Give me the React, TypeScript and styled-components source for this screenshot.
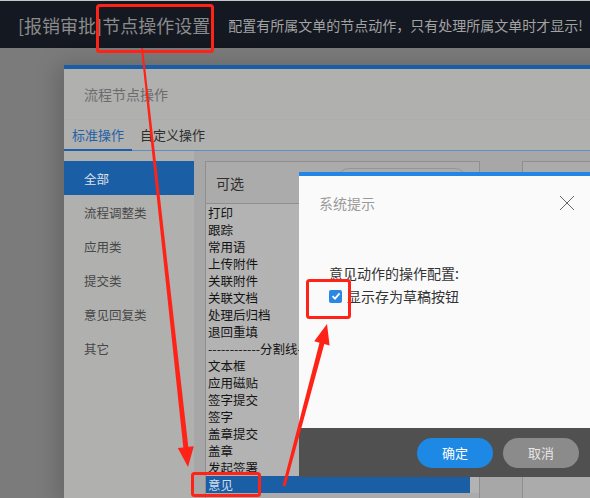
import styled, { createGlobalStyle } from "styled-components";

const GlobalStyle = createGlobalStyle`
  html, body {
    margin: 0;
    padding: 0;
    overflow: hidden;
    background: #7b7b7b;
  }
  * {
    box-sizing: border-box;
  }
  body {
    font-family: "Noto Sans CJK SC", "Noto Sans", sans-serif;
  }
`;

const Page = styled.div`
  position: relative;
  width: 590px;
  height: 498px;
  overflow: hidden;
  background: #7b7b7b;
`;

const Header = styled.div`
  height: 48px;
  background: #141821;
  border-top: 1px solid #c6c6c6;
  display: flex;
  align-items: center;
  padding-left: 18px;
  white-space: nowrap;
`;

const HeadTitle = styled.span`
  font-size: 18px;
  color: #8b8b8b;
`;

const HeadNote = styled.span`
  font-size: 14px;
  color: #a3a3a3;
  margin-left: 18px;
`;

const Stage = styled.div`
  padding: 17px 0 0 64px;
`;

const Modal = styled.div`
  width: 580px;
  height: 440px;
  background: #b0b0af;
  border-top: 4px solid #1a5da6;
  box-shadow: -6px 0 22px rgba(0, 0, 0, 0.18);
`;

const ModalTitle = styled.div`
  height: 51px;
  display: flex;
  align-items: center;
  padding-left: 20px;
  font-size: 14px;
  color: #6c6c6c;
  border-bottom: 1px solid #acacac;
`;

const Tabs = styled.div`
  height: 31px;
  display: flex;
  border-bottom: 1px solid #5d8fc3;
`;

const Tab = styled.div<{ $active?: boolean }>`
  padding: 0 8px;
  display: flex;
  align-items: center;
  font-size: 13px;
  color: ${(p) => (p.$active ? "#2462a6" : "#2e2e2e")};
  border-bottom: 2px solid ${(p) => (p.$active ? "#1d5fa8" : "transparent")};
  margin-bottom: -1px;
`;

const Body = styled.div`
  display: flex;
  height: 100%;
`;

const Sidebar = styled.ul`
  width: 130px;
  flex-shrink: 0;
  list-style: none;
  margin: 0;
  padding: 10px 0 0;
  background: #b0b0af;
`;

const SideItem = styled.li<{ $active?: boolean }>`
  height: 34px;
  display: flex;
  align-items: center;
  padding-left: 20px;
  font-size: 12.5px;
  white-space: nowrap;
  color: ${(p) => (p.$active ? "#dfe3ea" : "#474747")};
  background: ${(p) => (p.$active ? "#1a5ea6" : "transparent")};
`;

const Content = styled.div`
  flex: 1;
  min-width: 0;
  display: flex;
  gap: 42px;
  padding: 10px 0 0 11px;
  background: #a7a7a7;
`;

const Box = styled.div<{ $width: number }>`
  width: ${(p) => p.$width}px;
  flex-shrink: 0;
  border: 1px solid #8f8f8f;
  border-bottom: none;
  background: #ababab;
`;

const BoxHead = styled.div`
  height: 42px;
  display: flex;
  align-items: center;
  justify-content: space-between;
  padding: 0 12px 0 10px;
  font-size: 14px;
  color: #2f2f2f;
  border-bottom: 1px solid #8f8f8f;
`;

const Search = styled.div`
  width: 130px;
  height: 28px;
  border: 1px solid #959595;
  border-radius: 12px;
  align-self: flex-start;
  margin-top: 6px;
`;

const List = styled.ul`
  list-style: none;
  margin: 0;
  padding: 0 9px 0 0;
  background: #b3b3b3;
`;

const ListItem = styled.li<{ $active?: boolean }>`
  height: 17px;
  line-height: 17px;
  padding-left: 2px;
  font-size: 12.5px;
  white-space: nowrap;
  overflow: hidden;
  color: ${(p) => (p.$active ? "#d3dbe8" : "#141414")};
  background: ${(p) => (p.$active ? "#1a5ea6" : "transparent")};
`;

const Dialog = styled.div`
  position: absolute;
  left: 299px;
  top: 172px;
  width: 300px;
  border-top: 4px solid #2186e7;
  background: #fafafa;
`;

const DialogHead = styled.div`
  height: 54px;
  display: flex;
  align-items: center;
  justify-content: space-between;
  padding: 0 24px 0 20px;
  font-size: 14px;
  color: #9a9a9a;
`;

const DialogBody = styled.div`
  height: 198px;
  padding: 33px 0 0 30px;
  font-size: 14px;
  color: #333;
`;

const CheckRow = styled.label`
  display: flex;
  align-items: center;
  gap: 5px;
  margin-top: 3px;
`;

const CheckMark = styled.span`
  width: 13px;
  height: 13px;
  border-radius: 2px;
  background: #2b87e3;
  display: flex;
  align-items: center;
  justify-content: center;
`;

const DialogFoot = styled.div`
  height: 49px;
  background: #505050;
  display: flex;
  justify-content: flex-end;
  align-items: center;
  gap: 10px;
  padding-right: 20px;
`;

const Button = styled.button<{ $primary?: boolean }>`
  width: 76px;
  height: 30px;
  border: none;
  border-radius: 15px;
  font-family: inherit;
  font-size: 13px;
  color: ${(p) => (p.$primary ? "#ffffff" : "#e6e6e6")};
  background: ${(p) => (p.$primary ? "#1e88e5" : "#8b8b8b")};
`;

const Marks = styled.svg`
  position: absolute;
  left: 0;
  top: 0;
  pointer-events: none;
`;

const categories = ["全部", "流程调整类", "应用类", "提交类", "意见回复类", "其它"];

const actions = [
  "打印",
  "跟踪",
  "常用语",
  "上传附件",
  "关联附件",
  "关联文档",
  "处理后归档",
  "退回重填",
  "------------分割线------------",
  "文本框",
  "应用磁贴",
  "签字提交",
  "签字",
  "盖章提交",
  "盖章",
  "发起签署",
  "意见",
];

export default function App() {
  return (
    <Page>
      <GlobalStyle />
      <Header>
        <HeadTitle>[报销审批]节点操作设置</HeadTitle>
        <HeadNote>配置有所属文单的节点动作，只有处理所属文单时才显示!</HeadNote>
      </Header>
      <Stage>
        <Modal>
          <ModalTitle>流程节点操作</ModalTitle>
          <Tabs>
            <Tab $active>标准操作</Tab>
            <Tab>自定义操作</Tab>
          </Tabs>
          <Body>
            <Sidebar>
              {categories.map((c, i) => (
                <SideItem key={c} $active={i === 0}>
                  {c}
                </SideItem>
              ))}
            </Sidebar>
            <Content>
              <Box $width={275}>
                <BoxHead>
                  可选
                  <Search />
                </BoxHead>
                <List>
                  {actions.map((a) => (
                    <ListItem key={a} $active={a === "意见"}>
                      {a}
                    </ListItem>
                  ))}
                </List>
              </Box>
              <Box $width={200}>
                <BoxHead />
              </Box>
            </Content>
          </Body>
        </Modal>
      </Stage>

      <Dialog>
        <DialogHead>
          系统提示
          <svg width="16" height="16" viewBox="0 0 16 16">
            <path d="M1 1L15 15M15 1L1 15" stroke="#666" strokeWidth="1" />
          </svg>
        </DialogHead>
        <DialogBody>
          意见动作的操作配置:
          <CheckRow>
            <CheckMark>
              <svg width="10" height="10" viewBox="0 0 10 10">
                <path d="M1.5 5.2L4 7.6L8.6 2.4" stroke="#fff" strokeWidth="1.8" fill="none" />
              </svg>
            </CheckMark>
            显示存为草稿按钮
          </CheckRow>
        </DialogBody>
        <DialogFoot>
          <Button $primary>确定</Button>
          <Button>取消</Button>
        </DialogFoot>
      </Dialog>

      <Marks width="590" height="498" viewBox="0 0 590 498">
        <g fill="none" stroke="#ff2217" strokeWidth="3">
          <rect x="97.5" y="5.5" width="115" height="46" rx="2" />
          <rect x="307.5" y="280.5" width="42" height="37" rx="2" />
          <rect x="192.5" y="473.5" width="67" height="22" rx="2" />
        </g>
        <g fill="#ff2217">
          <polygon points="143,48 141,48 183.3,447.4 177.8,448 188,467 193.8,446.2 188.3,446.8" />
          <polygon points="285.4,486.4 282.6,485.6 319.5,342.7 314.2,341.2 327,324 329.6,345.4 324.3,343.9" />
        </g>
      </Marks>
    </Page>
  );
}
